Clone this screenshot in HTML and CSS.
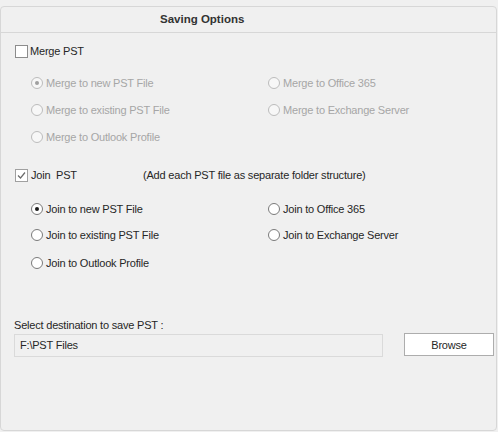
FILE: index.html
```html
<!DOCTYPE html>
<html lang="en">
<head>
    <meta charset="UTF-8">
    <meta name="viewport" content="width=device-width, initial-scale=1.0">
    <title>Saving Options</title>
    <link rel="stylesheet" href="styles.css">
</head>
<body>

    <div class="panel">
        <div class="panel-title">Saving Options</div>

        <div class="panel-body">
            <div class="check-row merge-row">
                <span class="checkbox"></span>
                <span class="check-label">Merge PST</span>
            </div>

            <div class="options merge-options disabled">
                <div class="option"><span class="radio checked"></span>Merge to new PST File</div>
                <div class="option"><span class="radio"></span>Merge to Office 365</div>
                <div class="option"><span class="radio"></span>Merge to existing PST File</div>
                <div class="option"><span class="radio"></span>Merge to Exchange Server</div>
                <div class="option"><span class="radio"></span>Merge to Outlook Profile</div>
            </div>

            <div class="check-row join-row">
                <span class="checkbox checked">
                    <svg width="9" height="9" viewBox="0 0 9 9"><path d="M1 4.5 L3.5 7 L8 1.5" fill="none" stroke="#6a6a6a" stroke-width="1.2"/></svg>
                </span>
                <span class="check-label join-label">Join&nbsp; PST</span>
                <span class="hint">(Add each PST file as separate folder structure)</span>
            </div>

            <div class="options join-options">
                <div class="option"><span class="radio checked"></span>Join to new PST File</div>
                <div class="option"><span class="radio"></span>Join to Office 365</div>
                <div class="option"><span class="radio"></span>Join to existing PST File</div>
                <div class="option"><span class="radio"></span>Join to Exchange Server</div>
                <div class="option"><span class="radio"></span>Join to Outlook Profile</div>
            </div>

            <div class="dest-label">Select destination to save PST :</div>
            <div class="dest-row">
                <div class="dest-input">F:\PST Files</div>
                <button class="browse">Browse</button>
            </div>
        </div>
    </div>

</body>
</html>
```

FILE: styles.css
```css
body {
    margin: 0;
    padding: 6px 0 0 0;
    background-color: #f0f0f0;
    font-family: "Liberation Sans", Arial, sans-serif;
    font-size: 11px;
    letter-spacing: -0.2px;
    color: #262626;
}
.panel {
    width: 497px;
    height: 425px;
    box-sizing: border-box;
    border: 1px solid #d7d7d7;
    border-radius: 4px;
    background-color: #f0f0f0;
}
.panel-title {
    height: 25px;
    line-height: 25px;
    border-bottom: 1px solid #d7d7d7;
    padding-left: 159px;
    font-weight: bold;
    font-size: 11.5px;
    letter-spacing: 0;
    color: #333;
}
.panel-body {
    padding-left: 13px;
}
.check-row {
    display: flex;
    align-items: center;
    height: 20px;
    padding-left: 1px;
}
.merge-row {
    margin-top: 8px;
}
.join-row {
    margin-top: 14px;
}
.checkbox {
    width: 11px;
    height: 11px;
    border: 1px solid #8c8c8c;
    background-color: white;
    display: flex;
    align-items: center;
    justify-content: center;
}
.checkbox.checked {
    border-color: #a0a0a0;
}
.check-label {
    margin-left: 2px;
}
.join-label {
    margin-left: 3px;
    width: 112px;
}
.options {
    display: grid;
    grid-template-columns: 237px 1fr;
    padding-left: 17px;
}
.merge-options {
    margin-top: 8px;
    grid-template-rows: 27px 27px 28px;
}
.join-options {
    margin-top: 11px;
    grid-template-rows: 26px 26px 30px;
}
.option {
    display: flex;
    align-items: center;
}
.radio {
    width: 10px;
    height: 10px;
    border: 1px solid #7a7a7a;
    border-radius: 50%;
    background-color: white;
    margin-right: 3px;
    display: flex;
    align-items: center;
    justify-content: center;
}
.radio.checked::after {
    content: "";
    width: 4px;
    height: 4px;
    border-radius: 50%;
    background-color: #1a1a1a;
}
.disabled {
    color: #a6a6a6;
}
.disabled .radio {
    border-color: #bcbcbc;
    background-color: #f7f7f7;
}
.disabled .radio.checked::after {
    background-color: #a0a0a0;
}
.dest-label {
    margin-top: 39px;
    height: 16px;
    line-height: 16px;
}
.dest-row {
    display: flex;
    align-items: flex-start;
    gap: 21px;
}
.dest-input {
    margin-top: 1px;
    width: 369px;
    height: 23px;
    box-sizing: border-box;
    border: 1px solid #dadada;
    padding-left: 5px;
    line-height: 20px;
}
.browse {
    width: 90px;
    height: 23px;
    border: 1px solid #adadad;
    background-color: white;
    font-family: "Liberation Sans", Arial, sans-serif;
    font-size: 11px;
    letter-spacing: -0.2px;
    color: #262626;
    padding: 0;
}
```
